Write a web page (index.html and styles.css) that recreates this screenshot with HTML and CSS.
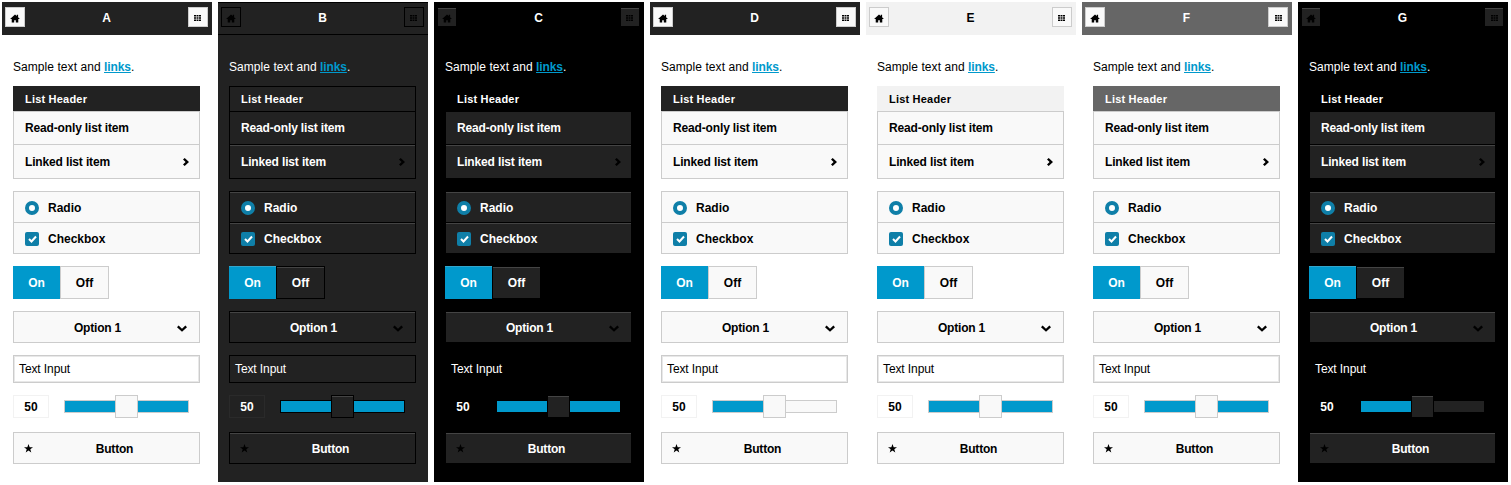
FILE: index.html

```html
<!DOCTYPE html>
<html lang="en">
<head>
  <meta charset="UTF-8">
  <title>Theme swatches</title>
  <link rel="stylesheet" href="styles.css">
</head>
<body>
  <svg class="sprite" width="0" height="0">
    <symbol id="i-home" viewBox="0 0 12 11"><path d="M6 .5 0 6h2v4.500h3V7.500h2v3h3V6h2L9.800 4V1H8.200v1.500z"/></symbol>
    <symbol id="i-grid" viewBox="0 0 7 6"><path d="M0 0h2v1.500H0zM2.500 0h2v1.500h-2zM5 0h2v1.500H5zM0 2.250h2v1.500H0zM2.500 2.250h2v1.500h-2zM5 2.250h2v1.500H5zM0 4.500h2V6H0zM2.500 4.500h2V6h-2zM5 4.500h2V6H5z"/></symbol>
    <symbol id="i-right" viewBox="0 0 6 8"><path d="M1.700 0 6 4 1.700 8 0 6.400 2.600 4 0 1.600z"/></symbol>
    <symbol id="i-down" viewBox="0 0 10 7"><path d="M1.600 .6 5 3.800 8.400 .6 10 2.200 5 6.800 0 2.200z"/></symbol>
    <symbol id="i-star" viewBox="0 0 10 10"><path d="M5 0 6.300 3.500H10L7 5.800 8.100 9.500 5 7.300 1.900 9.500 3 5.800 0 3.500H3.700z"/></symbol>
  </svg>

  <div class="swatches">
    <section class="panel theme-a">
      <header class="bar">
        <a class="bar-btn"><svg class="ico-home"><use href="#i-home"/></svg></a>
        <h1>A</h1>
        <a class="bar-btn"><svg class="ico-grid"><use href="#i-grid"/></svg></a>
      </header>
      <div class="content">
        <p class="sample">Sample text and <a class="link">links</a>.</p>
        <ul class="list">
          <li class="list-head">List Header</li>
          <li class="row">Read-only list item</li>
          <li class="row">Linked list item<svg class="ico-right"><use href="#i-right"/></svg></li>
        </ul>
        <div class="group">
          <div class="opt"><span class="radio"></span>Radio</div>
          <div class="opt"><span class="check"><svg viewBox="0 0 9 8"><path d="M1 4 3.500 6.500 8 1.500"/></svg></span>Checkbox</div>
        </div>
        <div class="toggle"><span class="on">On</span><span class="off">Off</span></div>
        <div class="select">Option 1<svg class="ico-down"><use href="#i-down"/></svg></div>
        <div class="input">Text Input</div>
        <div class="slider">
          <div class="num">50</div>
          <div class="track"><span class="fill"></span><span class="handle"></span></div>
        </div>
        <div class="button"><svg class="ico-star"><use href="#i-star"/></svg>Button</div>
      </div>
    </section>

    <section class="panel theme-b">
      <header class="bar">
        <a class="bar-btn"><svg class="ico-home"><use href="#i-home"/></svg></a>
        <h1>B</h1>
        <a class="bar-btn"><svg class="ico-grid"><use href="#i-grid"/></svg></a>
      </header>
      <div class="content">
        <p class="sample">Sample text and <a class="link">links</a>.</p>
        <ul class="list">
          <li class="list-head">List Header</li>
          <li class="row">Read-only list item</li>
          <li class="row">Linked list item<svg class="ico-right"><use href="#i-right"/></svg></li>
        </ul>
        <div class="group">
          <div class="opt"><span class="radio"></span>Radio</div>
          <div class="opt"><span class="check"><svg viewBox="0 0 9 8"><path d="M1 4 3.500 6.500 8 1.500"/></svg></span>Checkbox</div>
        </div>
        <div class="toggle"><span class="on">On</span><span class="off">Off</span></div>
        <div class="select">Option 1<svg class="ico-down"><use href="#i-down"/></svg></div>
        <div class="input">Text Input</div>
        <div class="slider">
          <div class="num">50</div>
          <div class="track"><span class="fill"></span><span class="handle"></span></div>
        </div>
        <div class="button"><svg class="ico-star"><use href="#i-star"/></svg>Button</div>
      </div>
    </section>

    <section class="panel theme-c">
      <header class="bar">
        <a class="bar-btn"><svg class="ico-home"><use href="#i-home"/></svg></a>
        <h1>C</h1>
        <a class="bar-btn"><svg class="ico-grid"><use href="#i-grid"/></svg></a>
      </header>
      <div class="content">
        <p class="sample">Sample text and <a class="link">links</a>.</p>
        <ul class="list">
          <li class="list-head">List Header</li>
          <li class="row">Read-only list item</li>
          <li class="row">Linked list item<svg class="ico-right"><use href="#i-right"/></svg></li>
        </ul>
        <div class="group">
          <div class="opt"><span class="radio"></span>Radio</div>
          <div class="opt"><span class="check"><svg viewBox="0 0 9 8"><path d="M1 4 3.500 6.500 8 1.500"/></svg></span>Checkbox</div>
        </div>
        <div class="toggle"><span class="on">On</span><span class="off">Off</span></div>
        <div class="select">Option 1<svg class="ico-down"><use href="#i-down"/></svg></div>
        <div class="input">Text Input</div>
        <div class="slider">
          <div class="num">50</div>
          <div class="track"><span class="fill"></span><span class="handle"></span></div>
        </div>
        <div class="button"><svg class="ico-star"><use href="#i-star"/></svg>Button</div>
      </div>
    </section>

    <section class="panel theme-d">
      <header class="bar">
        <a class="bar-btn"><svg class="ico-home"><use href="#i-home"/></svg></a>
        <h1>D</h1>
        <a class="bar-btn"><svg class="ico-grid"><use href="#i-grid"/></svg></a>
      </header>
      <div class="content">
        <p class="sample">Sample text and <a class="link">links</a>.</p>
        <ul class="list">
          <li class="list-head">List Header</li>
          <li class="row">Read-only list item</li>
          <li class="row">Linked list item<svg class="ico-right"><use href="#i-right"/></svg></li>
        </ul>
        <div class="group">
          <div class="opt"><span class="radio"></span>Radio</div>
          <div class="opt"><span class="check"><svg viewBox="0 0 9 8"><path d="M1 4 3.500 6.500 8 1.500"/></svg></span>Checkbox</div>
        </div>
        <div class="toggle"><span class="on">On</span><span class="off">Off</span></div>
        <div class="select">Option 1<svg class="ico-down"><use href="#i-down"/></svg></div>
        <div class="input">Text Input</div>
        <div class="slider">
          <div class="num">50</div>
          <div class="track"><span class="fill"></span><span class="handle"></span></div>
        </div>
        <div class="button"><svg class="ico-star"><use href="#i-star"/></svg>Button</div>
      </div>
    </section>

    <section class="panel theme-e">
      <header class="bar">
        <a class="bar-btn"><svg class="ico-home"><use href="#i-home"/></svg></a>
        <h1>E</h1>
        <a class="bar-btn"><svg class="ico-grid"><use href="#i-grid"/></svg></a>
      </header>
      <div class="content">
        <p class="sample">Sample text and <a class="link">links</a>.</p>
        <ul class="list">
          <li class="list-head">List Header</li>
          <li class="row">Read-only list item</li>
          <li class="row">Linked list item<svg class="ico-right"><use href="#i-right"/></svg></li>
        </ul>
        <div class="group">
          <div class="opt"><span class="radio"></span>Radio</div>
          <div class="opt"><span class="check"><svg viewBox="0 0 9 8"><path d="M1 4 3.500 6.500 8 1.500"/></svg></span>Checkbox</div>
        </div>
        <div class="toggle"><span class="on">On</span><span class="off">Off</span></div>
        <div class="select">Option 1<svg class="ico-down"><use href="#i-down"/></svg></div>
        <div class="input">Text Input</div>
        <div class="slider">
          <div class="num">50</div>
          <div class="track"><span class="fill"></span><span class="handle"></span></div>
        </div>
        <div class="button"><svg class="ico-star"><use href="#i-star"/></svg>Button</div>
      </div>
    </section>

    <section class="panel theme-f">
      <header class="bar">
        <a class="bar-btn"><svg class="ico-home"><use href="#i-home"/></svg></a>
        <h1>F</h1>
        <a class="bar-btn"><svg class="ico-grid"><use href="#i-grid"/></svg></a>
      </header>
      <div class="content">
        <p class="sample">Sample text and <a class="link">links</a>.</p>
        <ul class="list">
          <li class="list-head">List Header</li>
          <li class="row">Read-only list item</li>
          <li class="row">Linked list item<svg class="ico-right"><use href="#i-right"/></svg></li>
        </ul>
        <div class="group">
          <div class="opt"><span class="radio"></span>Radio</div>
          <div class="opt"><span class="check"><svg viewBox="0 0 9 8"><path d="M1 4 3.500 6.500 8 1.500"/></svg></span>Checkbox</div>
        </div>
        <div class="toggle"><span class="on">On</span><span class="off">Off</span></div>
        <div class="select">Option 1<svg class="ico-down"><use href="#i-down"/></svg></div>
        <div class="input">Text Input</div>
        <div class="slider">
          <div class="num">50</div>
          <div class="track"><span class="fill"></span><span class="handle"></span></div>
        </div>
        <div class="button"><svg class="ico-star"><use href="#i-star"/></svg>Button</div>
      </div>
    </section>

    <section class="panel theme-g">
      <header class="bar">
        <a class="bar-btn"><svg class="ico-home"><use href="#i-home"/></svg></a>
        <h1>G</h1>
        <a class="bar-btn"><svg class="ico-grid"><use href="#i-grid"/></svg></a>
      </header>
      <div class="content">
        <p class="sample">Sample text and <a class="link">links</a>.</p>
        <ul class="list">
          <li class="list-head">List Header</li>
          <li class="row">Read-only list item</li>
          <li class="row">Linked list item<svg class="ico-right"><use href="#i-right"/></svg></li>
        </ul>
        <div class="group">
          <div class="opt"><span class="radio"></span>Radio</div>
          <div class="opt"><span class="check"><svg viewBox="0 0 9 8"><path d="M1 4 3.500 6.500 8 1.500"/></svg></span>Checkbox</div>
        </div>
        <div class="toggle"><span class="on">On</span><span class="off">Off</span></div>
        <div class="select">Option 1<svg class="ico-down"><use href="#i-down"/></svg></div>
        <div class="input">Text Input</div>
        <div class="slider">
          <div class="num">50</div>
          <div class="track"><span class="fill"></span><span class="handle"></span></div>
        </div>
        <div class="button"><svg class="ico-star"><use href="#i-star"/></svg>Button</div>
      </div>
    </section>
  </div>
</body>
</html>
```

FILE: styles.css

```css
* {
  box-sizing: border-box;
}
body {
  margin: 0;
  background: #fff;
  font-family: "Liberation Sans", Arial, sans-serif;
  font-size: 12px;
}
.sprite {
  display: block;
  height: 0;
}
.swatches {
  display: flex;
  gap: 6px;
  padding: 2px;
}

/* light is the default, dark themes override below */
.panel {
  --page: #fff;
  --text: #000;
  --bar: #222;
  --bar-text: #fff;
  --bar-line: #222;
  --btn: #f9f9f9;
  --btn-line: #ccc;
  --btn-icon: #000;
  --head: #222;
  --head-text: #fff;
  --head-line: #222;
  --item: #f9f9f9;
  --line: #ccc;
  --hi: #f9f9f9;
  --on-hi: #0099cc;
  --icon: #000;
  --input: #fff;
  --input-line: #ccc;
  --input-inner: #e8e8e8;
  --num-line: #f2f2f2;
  --rest: #0099cc;
  width: 210px;
  height: 480px;
  flex: none;
  background: var(--page);
  color: var(--text);
}
.theme-b {
  --page: #222;
  --text: #fff;
  --bar-line: #000;
  --btn: #222;
  --btn-line: #000;
  --head-line: #000;
  --item: #222;
  --line: #000;
  --hi: #444;
  --on-hi: #33a6cc;
  --input: #222;
  --input-line: #000;
  --input-inner: #222;
  --num-line: #2a2a2a;
}
.theme-c,
.theme-g {
  --page: #000;
  --text: #fff;
  --bar: #000;
  --bar-line: #000;
  --btn: #222;
  --btn-line: #000;
  --head: #000;
  --head-line: #000;
  --item: #222;
  --line: #000;
  --hi: #444;
  --on-hi: #33a6cc;
  --input: #000;
  --input-line: #000;
  --input-inner: #000;
  --num-line: #000;
}
.theme-d {
  --rest: #f9f9f9;
}
.theme-e {
  --bar: #f2f2f2;
  --bar-text: #000;
  --bar-line: #f2f2f2;
  --head: #f2f2f2;
  --head-text: #000;
  --head-line: #f2f2f2;
}
.theme-f {
  --bar: #666;
  --bar-line: #666;
  --head: #666;
  --head-line: #666;
}
.theme-g {
  --rest: #222;
}

.bar {
  display: flex;
  align-items: center;
  justify-content: space-between;
  height: 33px;
  padding: 0 4px 3px 3px;
  background: var(--bar);
  border-top: 1px solid var(--bar-line);
  border-bottom: 1px solid var(--bar-line);
  color: var(--bar-text);
}
.bar h1 {
  margin: 0;
  padding-top: 2px;
  font-size: 12px;
  font-weight: bold;
}
.bar-btn {
  display: flex;
  align-items: center;
  justify-content: center;
  width: 20px;
  height: 20px;
  padding-top: 2px;
  background: var(--btn);
  border: 1px solid var(--btn-line);
  color: var(--btn-icon);
}
.theme-c .bar-btn,
.theme-g .bar-btn {
  box-shadow: inset 0 1px 0 var(--hi);
}
.bar svg,
.list svg,
.select svg,
.button svg {
  fill: currentColor;
}
.ico-home {
  width: 10px;
  height: 9px;
}
.ico-grid {
  width: 7px;
  height: 6px;
}
.ico-right {
  width: 6px;
  height: 8px;
  color: var(--icon);
}
.ico-down {
  position: absolute;
  right: 12px;
  top: 13px;
  width: 10px;
  height: 7px;
  color: var(--icon);
}
.ico-star {
  position: absolute;
  left: 10px;
  top: 11px;
  width: 9px;
  height: 9px;
  color: var(--icon);
}

.content {
  padding: 25px 12px 0 11px;
}
.sample {
  margin: 0 0 11px 0;
  letter-spacing: .06px;
  line-height: 15px;
}
.link {
  color: #0099cc;
  font-weight: bold;
  letter-spacing: -.1px;
  text-decoration: underline;
}

.list {
  list-style: none;
  margin: 0 0 12px 0;
  padding: 0;
  font-weight: bold;
}
.list-head {
  height: 25px;
  padding-left: 11px;
  line-height: 25px;
  font-size: 11px;
  letter-spacing: .2px;
  background: var(--head);
  color: var(--head-text);
  border: 1px solid var(--head-line);
  border-bottom: 0;
}
.row {
  display: flex;
  align-items: center;
  justify-content: space-between;
  height: 34px;
  padding: 0 10px 0 11px;
  letter-spacing: -.15px;
  background: var(--item);
  border: 1px solid var(--line);
  border-top: 0;
  box-shadow: inset 0 1px 0 var(--hi);
}
.list-head + .row {
  border-top: 1px solid var(--line);
  box-shadow: none;
}

.group {
  margin-bottom: 12px;
  font-weight: bold;
}
.opt {
  display: flex;
  align-items: center;
  gap: 9px;
  height: 31px;
  padding: 1px 0 0 11px;
  background: var(--item);
  border: 1px solid var(--line);
  border-top: 0;
  box-shadow: inset 0 1px 0 var(--hi);
}
.opt:first-child {
  height: 32px;
  border-top: 1px solid var(--line);
}
.radio {
  display: flex;
  width: 14px;
  height: 14px;
  border-radius: 50%;
  border: 4.500px solid #0f7fa8;
  background: #fff;
}
.check {
  display: flex;
  align-items: center;
  justify-content: center;
  width: 14px;
  height: 14px;
  border-radius: 2px;
  background: #0f7fa8;
}
.check svg {
  width: 9px;
  height: 8px;
  fill: none;
  stroke: #fff;
  stroke-width: 2;
}

.toggle {
  display: flex;
  height: 33px;
  margin-bottom: 12px;
  font-weight: bold;
  text-align: center;
}
.on {
  width: 47px;
  line-height: 35px;
  background: #0099cc;
  box-shadow: inset 0 1px 0 var(--on-hi);
  color: #fff;
}
.off {
  width: 49px;
  line-height: 33px;
  background: var(--item);
  border: 1px solid var(--line);
  box-shadow: inset 0 1px 0 var(--hi);
}

.select {
  position: relative;
  height: 32px;
  margin-bottom: 12px;
  padding-right: 18px;
  background: var(--item);
  border: 1px solid var(--line);
  box-shadow: inset 0 1px 0 var(--hi);
  font-weight: bold;
  letter-spacing: -.2px;
  line-height: 33px;
  text-align: center;
}
.input {
  height: 28px;
  margin-bottom: 12px;
  padding-left: 5px;
  letter-spacing: -.1px;
  background: var(--input);
  border: 1px solid var(--input-line);
  box-shadow: inset 0 0 0 1px var(--input-inner);
  line-height: 26px;
}
.slider {
  display: flex;
  align-items: center;
  gap: 15px;
  height: 23px;
  margin-bottom: 14px;
}
.num {
  width: 36px;
  height: 23px;
  border: 1px solid var(--num-line);
  font-weight: bold;
  line-height: 23px;
  text-align: center;
}
.track {
  position: relative;
  width: 125px;
  height: 13px;
  background: var(--rest);
  border: 1px solid var(--line);
}
.fill {
  display: block;
  width: 50%;
  height: 100%;
  background: #0099cc;
}
.handle {
  position: absolute;
  left: 50px;
  top: -6px;
  width: 23px;
  height: 23px;
  background: var(--item);
  border: 1px solid var(--line);
  box-shadow: inset 0 1px 0 var(--hi);
}
.button {
  position: relative;
  height: 32px;
  padding-left: 16px;
  background: var(--item);
  border: 1px solid var(--line);
  box-shadow: inset 0 1px 0 var(--hi);
  font-weight: bold;
  letter-spacing: -.2px;
  line-height: 33px;
  text-align: center;
}
```
